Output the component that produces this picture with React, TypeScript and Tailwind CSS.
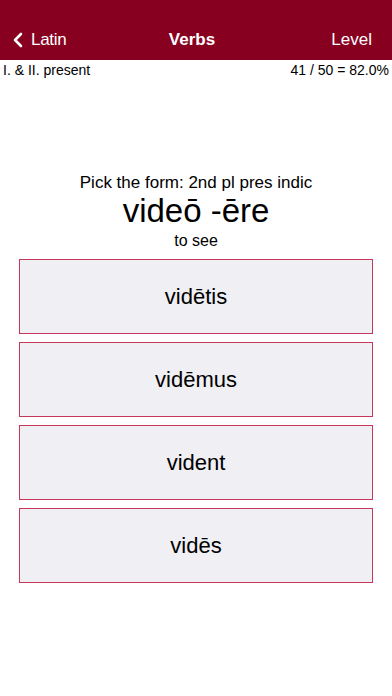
import { ChevronLeft } from 'lucide-react';

const choices = ['vidētis', 'vidēmus', 'vident', 'vidēs'];

const App = () => {
  return (
    <div className="w-[392px] h-[696px] bg-white font-['Liberation_Sans',Arial,sans-serif] text-black">
      <div className="h-[60px] bg-[#880020] pt-5 flex items-center px-[12px] text-white text-[17px]">
        <div className="flex-1 flex items-center">
          <ChevronLeft className="w-[24px] h-[28px] -ml-[6px]" strokeWidth={2.6} />
          <span className="ml-[1px] tracking-[-0.3px]">Latin</span>
        </div>
        <div className="font-bold">Verbs</div>
        <div className="flex-1 text-right pr-[8px]">Level</div>
      </div>
      <div className="flex justify-between px-[3px] pt-[1px] text-[14px] leading-[18px]">
        <span>I. &amp; II. present</span>
        <span>41 / 50 = 82.0%</span>
      </div>
      <div className="mt-[94px] flex flex-col items-center">
        <div className="text-[17px] leading-[20px]">Pick the form: 2nd pl pres indic</div>
        <div className="text-[33px] leading-[36px]">videō -ēre</div>
        <div className="text-[16px] leading-[24px]">to see</div>
      </div>
      <div className="mt-[6px] px-[19px] flex flex-col gap-[8px]">
        {choices.map((c) => (
          <button
            key={c}
            className="h-[75px] w-full bg-[#efeff4] border border-[#c3385a] text-[22px] flex items-center justify-center"
          >
            {c}
          </button>
        ))}
      </div>
    </div>
  );
};

export default App;
